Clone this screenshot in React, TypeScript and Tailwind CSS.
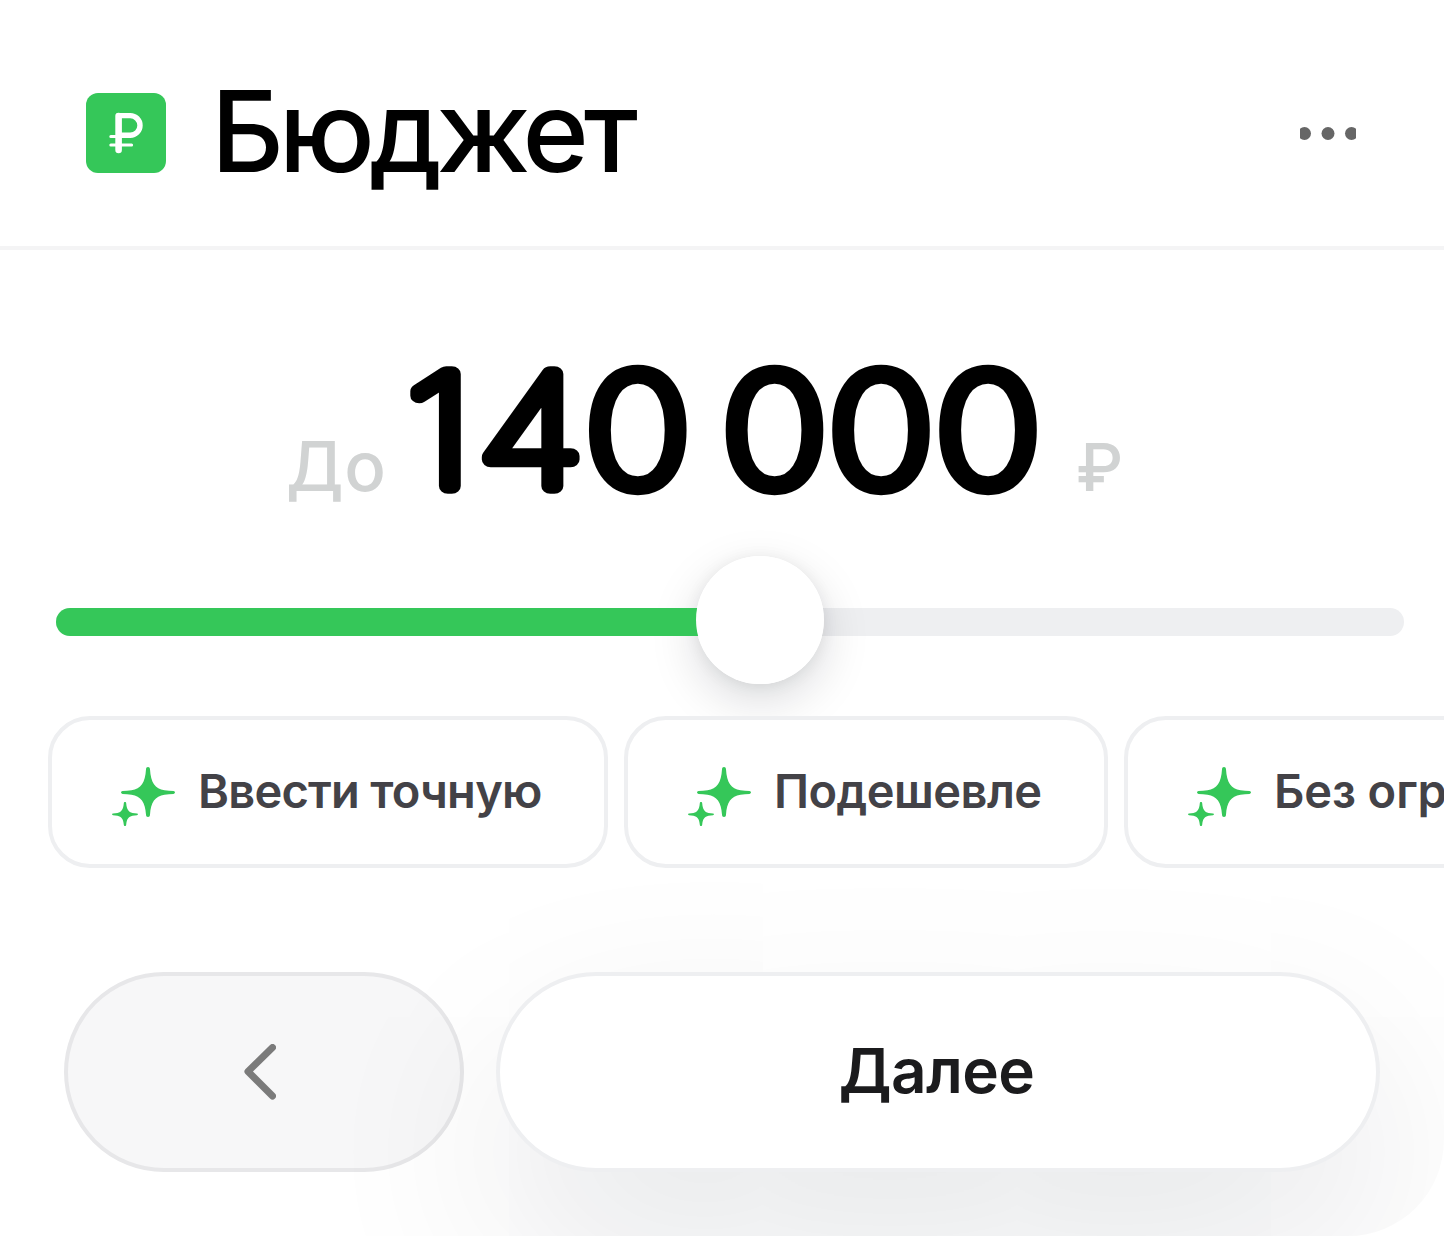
import { useState } from "react"

const chips = [
  { label: "Ввести точную", className: "w-[560px] tracking-[-0.75px]" },
  { label: "Подешевле", className: "w-[484px] tracking-[-0.55px]" },
  { label: "Без ограничений", className: "w-[620px] tracking-[-0.1px]" },
]

function RubleIcon() {
  return (
    <svg
      className="size-20 shrink-0"
      viewBox="0 0 80 80"
      fill="none"
      stroke="#fff"
      strokeLinecap="round"
      strokeLinejoin="round"
    >
      <rect width="80" height="80" rx="12" fill="#35C759" stroke="none" />
      <path d="M32.6 23V57" strokeWidth="6.6" />
      <path d="M32.600 22.600H44.200a9.800 9.800 0 0 1 0 19.600H32.600" strokeWidth="5.400" />
      <path d="M24.800 43.400H34M24.800 52H45.600" strokeWidth="3" />
    </svg>
  )
}

function SparklesIcon() {
  return (
    <svg className="mt-[10px] h-[60px] w-16 shrink-0" viewBox="0 0 64 60" fill="#35C759">
      <path d="M36 0c1.2 0 1.9.8 2 2.200 .8 13.500 5 19.300 14.500 21 3 .5 6 .6 9 .9 2 .3 2 2.500 0 2.800-3 .3-6 .4-9 .9-9.500 1.700-13.700 7-14.500 20-.1 1.400-.8 2.200-2 2.200s-1.900-.8-2-2.200c-.8-13-5-18.300-14.500-20-3-.5-6-.6-9-.9-2-.3-2-2.500 0-2.800 3-.3 6-.4 9-.9C29 21.500 33.200 15.700 34 2.200 34.100.8 34.800 0 36 0Z" />
      <path d="M13 35c.8 0 1.100.5 1.200 1.300.5 6.200 2.300 8.800 6.300 9.700 1.500.3 3 .3 4.500.5 1.300.2 1.300 1.500 0 1.700-1.500.2-3 .2-4.500.5-4 .8-5.800 3.200-6.300 9-.1.800-.4 1.300-1.200 1.300s-1.100-.5-1.200-1.300c-.5-5.800-2.300-8.200-6.300-9-1.500-.3-3-.3-4.500-.5-1.300-.2-1.300-1.500 0-1.700 1.500-.2 3-.2 4.500-.5 4-.9 5.800-3.500 6.300-9.700.1-.8.4-1.300 1.200-1.300Z" />
    </svg>
  )
}

// round joins on thin digits give the soft ends of the big figure
function Amount({ value }: { value: string }) {
  return (
    <svg className="h-[160px] w-[640px] shrink-0 overflow-visible" viewBox="0 0 640 160">
      <text
        transform="scale(1.16 1)"
        x="5.700 66.900 159.600 258 277.300 369.100 461.400"
        y="127.500"
        className="fill-black stroke-black text-[154px] font-thin"
        strokeWidth="15.400"
        strokeLinejoin="round"
        strokeLinecap="round"
      >
        {value}
      </text>
    </svg>
  )
}

export default function App() {
  const [percent] = useState(52.226)

  return (
    <div className="flex h-[1236px] w-[1444px] flex-col overflow-hidden rounded-[96px] bg-white font-['Inter',sans-serif]">
      <header className="flex h-[250px] shrink-0 items-center border-b-4 border-[#f4f4f5] pl-[86px] pr-[88px] pt-5">
        <RubleIcon />
        <h1 className="-mt-[3px] ml-[45px] text-[113px] leading-none font-medium tracking-[-5.300px] text-black">Бюджет</h1>
        <svg className="ml-auto h-[14px] w-[56px]" viewBox="1 0 56 14" fill="#666">
          <circle cx="5.500" cy="7.500" r="6.500" />
          <circle cx="29" cy="7.500" r="6.500" />
          <circle cx="52.500" cy="7.500" r="6.500" />
        </svg>
      </header>

      <div className="flex h-[306px] shrink-0 pl-[286px] pt-[108px]">
        <span className="w-[114px] pt-[66px] text-[69px] leading-[84px] font-medium tracking-[0.5px] text-[#d1d3d3]">До</span>
        <Amount value="140 000" />
        <span className="ml-[36px] pt-[67px] text-[66px] leading-[84px] font-medium text-[#d1d3d3]">₽</span>
      </div>

      {/* Slider */}
      <div className="flex h-40 shrink-0 pl-14 pr-10">
        <div className="relative mt-[52px] h-7 w-full rounded-full bg-[#eeeff1]">
          {/* the shadow lies under the fill, the knob over it */}
          <div
            className="absolute -top-[52px] size-32 -translate-x-1/2 rounded-full shadow-[0_2px_16px_rgba(0,0,0,0.07),0_16px_48px_rgba(10,15,25,0.15)]"
            style={{ left: `${percent}%` }}
          />
          <div className="relative h-7 rounded-l-full bg-[#35C759]" style={{ width: `${percent}%` }} />
          <div
            className="absolute -top-[52px] size-32 -translate-x-1/2 rounded-full bg-white"
            style={{ left: `${percent}%` }}
          />
        </div>
      </div>

      {/* Chips */}
      <div className="relative flex shrink-0 gap-4 pl-12">
        {chips.map((chip) => (
          <button
            key={chip.label}
            className={`flex h-[152px] shrink-0 items-center rounded-[42px] border-4 border-[#eeeff1] bg-white pl-[60px] text-[47px] font-semibold whitespace-nowrap text-[#434247] ${chip.className}`}
          >
            <SparklesIcon />
            <span className="mb-[2px] ml-[22px]">{chip.label}</span>
          </button>
        ))}
      </div>

      <div className="mt-[104px] flex shrink-0 gap-8 px-16">
        <button className="flex h-[200px] w-[400px] shrink-0 items-center justify-center rounded-full border-4 border-[#e7e7e9] bg-[#f7f7f8]">
          <svg
            className="mr-2 h-14 w-8"
            viewBox="0 0 32 56"
            fill="none"
            stroke="#7b7b7b"
            strokeWidth="7"
            strokeLinecap="round"
            strokeLinejoin="round"
          >
            <path d="M28.500 3.500 4 27.500l24.500 24.500" />
          </svg>
        </button>
        <button className="relative flex h-[200px] w-[884px] shrink-0 items-center justify-center rounded-full border-4 border-[#eeeff1] bg-white pr-[3px] pb-[3px] text-[62px] font-semibold tracking-[-0.6px] text-[#1b1b1d] shadow-[0_80px_200px_rgba(10,20,40,0.11)]">
          Далее
        </button>
      </div>
    </div>
  )
}
